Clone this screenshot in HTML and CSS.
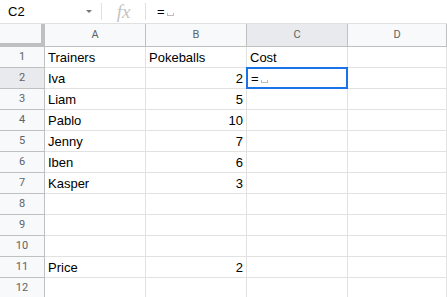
FILE: index.html
```html
<!DOCTYPE html>
<html lang="en">
  <head>
    <meta charset="UTF-8" />
    <meta name="viewport" content="width=device-width, initial-scale=1.0" />
    <title>Sheet</title>
    <link rel="stylesheet" href="styles.css">
  </head>
  <body>
    <div class="formula-bar">
      <div class="name-box">C2<span class="caret"></span></div>
      <div class="fx">fx</div>
      <div class="formula">=<span class="space-mark"></span></div>
    </div>

    <div class="sheet">
      <!-- header row -->
      <div class="corner"></div>
      <div class="col-head">A</div>
      <div class="col-head">B</div>
      <div class="col-head active">C</div>
      <div class="col-head">D</div>

      <div class="row-head">1</div>
      <div class="cell">Trainers</div>
      <div class="cell">Pokeballs</div>
      <div class="cell">Cost</div>
      <div class="cell"></div>

      <div class="row-head active">2</div>
      <div class="cell">Iva</div>
      <div class="cell num">2</div>
      <div class="cell selected">=<span class="space-mark"></span></div>
      <div class="cell"></div>

      <div class="row-head">3</div>
      <div class="cell">Liam</div>
      <div class="cell num">5</div>
      <div class="cell"></div>
      <div class="cell"></div>

      <div class="row-head">4</div>
      <div class="cell">Pablo</div>
      <div class="cell num">10</div>
      <div class="cell"></div>
      <div class="cell"></div>

      <div class="row-head">5</div>
      <div class="cell">Jenny</div>
      <div class="cell num">7</div>
      <div class="cell"></div>
      <div class="cell"></div>

      <div class="row-head">6</div>
      <div class="cell">Iben</div>
      <div class="cell num">6</div>
      <div class="cell"></div>
      <div class="cell"></div>

      <div class="row-head">7</div>
      <div class="cell">Kasper</div>
      <div class="cell num">3</div>
      <div class="cell"></div>
      <div class="cell"></div>

      <div class="row-head">8</div>
      <div class="cell"></div>
      <div class="cell"></div>
      <div class="cell"></div>
      <div class="cell"></div>

      <div class="row-head">9</div>
      <div class="cell"></div>
      <div class="cell"></div>
      <div class="cell"></div>
      <div class="cell"></div>

      <div class="row-head">10</div>
      <div class="cell"></div>
      <div class="cell"></div>
      <div class="cell"></div>
      <div class="cell"></div>

      <div class="row-head">11</div>
      <div class="cell">Price</div>
      <div class="cell num">2</div>
      <div class="cell"></div>
      <div class="cell"></div>

      <div class="row-head">12</div>
      <div class="cell"></div>
      <div class="cell"></div>
      <div class="cell"></div>
      <div class="cell"></div>
    </div>
  </body>
</html>
```

FILE: styles.css
```css
* {
  box-sizing: border-box;
}

body {
  margin: 0;
  background: #fff;
  font-family: "Liberation Sans", Arial, sans-serif;
  color: #000;
  overflow: hidden;
}

/* formula bar */
.formula-bar {
  display: flex;
  align-items: center;
  height: 24px;
  border-bottom: 1px solid #e0e0e0;
  font-size: 13px;
}

.name-box {
  position: relative;
  width: 102px;
  height: 17px;
  padding-left: 8px;
  line-height: 17px;
  border-right: 1px solid #e0e0e0;
}

.caret {
  position: absolute;
  right: 9px;
  top: 7px;
  border-left: 3px solid transparent;
  border-right: 3px solid transparent;
  border-top: 3px solid #777;
}

.fx {
  width: 44px;
  height: 17px;
  line-height: 17px;
  text-align: center;
  border-right: 1px solid #e0e0e0;
  font-family: "Liberation Serif", serif;
  font-style: italic;
  font-size: 19px;
  color: #c4c4c4;
}

.formula {
  padding-left: 11px;
  line-height: 17px;
}

.space-mark {
  display: inline-block;
  width: 7px;
  height: 3px;
  margin-left: 2px;
  border: 1px solid #bdbdbd;
  border-top: none;
}

/* grid */
.sheet {
  display: grid;
  grid-template-columns: 45px 101px 101px 101px 1fr;
  grid-template-rows: 23px repeat(12, 21px);
}

.corner {
  background: #f8f9fa;
  border-right: 4px solid #c0c0c0;
  border-bottom: 4px solid #c0c0c0;
}

.col-head {
  background: #f8f9fa;
  border-right: 1px solid #c0c0c0;
  border-bottom: 1px solid #c0c0c0;
  text-align: center;
  font-family: Roboto, "Liberation Sans", sans-serif;
  font-size: 11px;
  line-height: 22px;
  color: #5f6368;
}

.row-head {
  background: #f8f9fa;
  border-right: 1px solid #c0c0c0;
  border-bottom: 1px solid #c0c0c0;
  text-align: center;
  font-family: Roboto, "Liberation Sans", sans-serif;
  font-size: 11px;
  line-height: 20px;
  color: #5f6368;
}

.col-head.active,
.row-head.active {
  background: #e8eaed;
}

.cell {
  border-right: 1px solid #e2e2e2;
  border-bottom: 1px solid #e2e2e2;
  padding: 0 3px;
  font-size: 13px;
  line-height: 21px;
  white-space: nowrap;
  overflow: hidden;
}

.cell.num {
  text-align: right;
}

.cell.selected {
  position: relative;
  z-index: 1;
  margin: -1px 0 0 -1px;
  border: 2px solid #1a73e8;
  line-height: 19px;
  padding-left: 3px;
}
```
